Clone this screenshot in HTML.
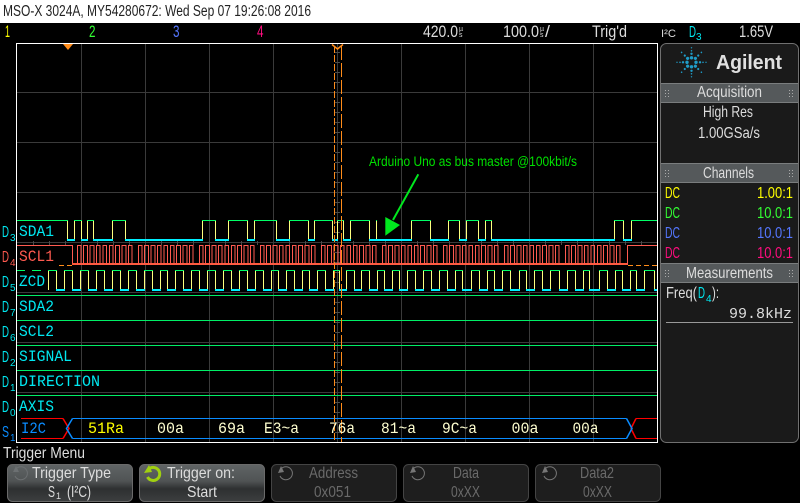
<!DOCTYPE html>
<html><head><meta charset="utf-8"><title>Oscilloscope</title>
<style>
html,body{margin:0;padding:0;background:#000;width:800px;height:503px;overflow:hidden}
svg{display:block}
text{font-family:"Liberation Sans",sans-serif;font-size:16px;fill:#ddd}
.m{font-family:"Liberation Mono",monospace;font-size:16px}
.c{fill:#00e8f0}
.l path,.l line,.l rect,#b{shape-rendering:crispEdges}
</style></head><body>
<svg width="800" height="503" viewBox="0 0 800 503" xmlns="http://www.w3.org/2000/svg">
<defs>
<linearGradient id="k" x1="0" y1="0" x2="0" y2="1"><stop offset="0" stop-color="#606465"/><stop offset=".45" stop-color="#505354"/><stop offset=".66" stop-color="#2e3031"/><stop offset="1" stop-color="#3c3e3f"/></linearGradient>
<path id="b" fill="none" stroke="#ff5a50" d="M0 265V245.5H3.7V265M6.4 265V245.5H10.1V265M12.8 265V245.5H16.5V265M19.2 265V245.5H22.9V265M25.6 265V245.5H29.3V265M32 265V245.5H35.7V265M38.4 265V245.5H42.1V265M44.8 265V245.5H48.5V265M51.2 265V245.5H54.9V265"/>
<g id="ray"><circle cx="4.5" cy="0" r="1.7"/><circle cx="8.5" cy="0" r="1.2"/><circle cx="11.5" cy="0" r=".8"/><circle cx="14.5" cy="0" r=".7"/></g>
<g id="ray2"><circle cx="5.5" cy="0" r="1.6"/><circle cx="9.5" cy="0" r="1.1"/><circle cx="14" cy="0" r=".8"/></g>
<g id="grip" fill="#aaa"><rect x="0" y="0" width="1" height="1"/><rect x="3" y="0" width="1" height="1"/><rect x="0" y="3" width="1" height="1"/><rect x="3" y="3" width="1" height="1"/><rect x="0" y="6" width="1" height="1"/><rect x="3" y="6" width="1" height="1"/></g>
</defs>

<rect width="800" height="503" fill="#000"/>
<rect width="800" height="23" fill="#fff"/>
<text x="3" y="16" style="fill:#222;font-size:15.5px" textLength="308" lengthAdjust="spacingAndGlyphs">MSO-X 3024A, MY54280672: Wed Sep 07 19:26:08 2016</text>

<!-- top status -->
<text x="5" y="37" style="fill:#ff0;font-size:17px" textLength="5" lengthAdjust="spacingAndGlyphs">1</text>
<text x="89" y="37" style="fill:#33ff33;font-size:17px" textLength="6.5" lengthAdjust="spacingAndGlyphs">2</text>
<text x="173" y="37" style="fill:#5577ff;font-size:17px" textLength="6.5" lengthAdjust="spacingAndGlyphs">3</text>
<text x="257" y="37" style="fill:#ff0d7f;font-size:17px" textLength="6.5" lengthAdjust="spacingAndGlyphs">4</text>
<text x="423" y="37" style="font-size:17px" textLength="35" lengthAdjust="spacingAndGlyphs">420.0</text>
<text x="459" y="31" style="font-size:7px">µ</text><text x="459" y="37" style="font-size:7px">s</text>
<text x="503" y="37" style="font-size:17px" textLength="36" lengthAdjust="spacingAndGlyphs">100.0</text>
<text x="540" y="31" style="font-size:7px">µ</text><text x="540" y="37" style="font-size:7px">s</text>
<text x="545" y="37" style="font-size:17px" textLength="5" lengthAdjust="spacingAndGlyphs">/</text>
<text x="592" y="37" style="font-size:17px" textLength="35" lengthAdjust="spacingAndGlyphs">Trig'd</text>
<text x="661" y="37" style="font-size:11px" textLength="15" lengthAdjust="spacingAndGlyphs">I²C</text>
<text x="689" y="37" class="c" style="font-size:16px" textLength="7" lengthAdjust="spacingAndGlyphs">D</text><text x="696" y="40" class="c" style="font-size:10px">3</text>
<text x="739" y="37" style="font-size:17px" textLength="34" lengthAdjust="spacingAndGlyphs">1.65V</text>

<!-- grid -->
<g class="l">
<path stroke="#3a3a3a" fill="none" d="M81.5 44V442M145.5 44V442M209.5 44V442M273.5 44V442M337.5 44V442M401.5 44V442M465.5 44V442M529.5 44V442M593.5 44V442M17 92.5H657M17 142.5H657M17 192.5H657M17 242.5H657M17 292.5H657M17 342.5H657M17 392.5H657"/>
<path stroke="#4a4a4a" fill="none" d="M335 52.5h5M335 62.5h5M335 72.5h5M335 82.5h5M335 102.5h5M335 112.5h5M335 122.5h5M335 132.5h5M335 152.5h5M335 162.5h5M335 172.5h5M335 182.5h5M335 202.5h5M335 212.5h5M335 222.5h5M335 232.5h5M335 252.5h5M335 262.5h5M335 272.5h5M335 282.5h5M335 302.5h5M335 312.5h5M335 322.5h5M335 332.5h5M335 352.5h5M335 362.5h5M335 372.5h5M335 382.5h5M335 402.5h5M335 412.5h5M335 422.5h5M335 432.5h5"/>
<path stroke="#4a4a4a" fill="none" d="M33.5 241v4M49.5 241v4M65.5 241v4M97.5 241v4M113.5 241v4M129.5 241v4M161.5 241v4M177.5 241v4M193.5 241v4M225.5 241v4M241.5 241v4M257.5 241v4M289.5 241v4M305.5 241v4M321.5 241v4M353.5 241v4M369.5 241v4M385.5 241v4M417.5 241v4M433.5 241v4M449.5 241v4M481.5 241v4M497.5 241v4M513.5 241v4M545.5 241v4M561.5 241v4M577.5 241v4M609.5 241v4M625.5 241v4M641.5 241v4"/>
<!-- frame -->
<path stroke="#fff" fill="none" d="M16.5 43.5H657.5V442.5H16.5Z"/>
<!-- flat digital lines -->
<path stroke="#00ee66" fill="none" d="M17 295.5H657M17 320.5H657M17 345.5H657M17 370.5H657M17 395.5H657"/>

<!-- SDA1 -->
<path stroke="#ffff80" fill="none" d="M67.5 221V240M74.5 221V240M81.5 221V240M87.5 221V240M93.5 221V240M112.5 221V240M125.5 221V240M202.5 221V240M215.5 221V240M228.5 221V240M247.5 221V240M254.5 221V240M276.5 221V240M289.5 221V240M308.5 221V240M314.5 221V240M332.5 221V240M337.5 221V240M343.5 221V240M350.5 221V240M369.5 221V240M376.5 221V240M411.5 221V240M430.5 221V240M448.5 221V240M459.5 221V240M466.5 221V240M478.5 221V240M485.5 221V240M491.5 221V240M614.5 221V240M623.5 221V240M631.5 221V240"/>
<path stroke="#00ff66" fill="none" d="M17 220.5H68M74 220.5H82M87 220.5H94M112 220.5H126M202 220.5H216M228 220.5H248M254 220.5H277M289 220.5H309M314 220.5H333M337 220.5H344M350 220.5H370M376 220.5H377M411 220.5H431M448 220.5H460M466 220.5H479M485 220.5H492M614 220.5H624M631 220.5H657"/>
<path stroke="#00f0ff" stroke-width="2" fill="none" d="M67 240H75M81 240H88M93 240H113M125 240H203M215 240H229M247 240H255M276 240H290M308 240H315M332 240H338M343 240H351M369 240H412M430 240H449M459 240H467M478 240H486M491 240H615M623 240H632"/>

<!-- SCL1 -->
<path stroke="#ff5a50" fill="none" d="M17 245.5H72.5V265"/>
<path stroke="#ff5a3c" stroke-width="2" fill="none" d="M72 264H627"/>
<path stroke="#ff8c1a" fill="none" stroke-dasharray="5 3" d="M59 265.5H72M628 265.5H657"/>
<use href="#b" x="77.3"/><use href="#b" x="138.3"/><use href="#b" x="199.3"/><use href="#b" x="260.3"/><use href="#b" x="321.3"/><use href="#b" x="382.3"/><use href="#b" x="443.3"/><use href="#b" x="504.3"/><use href="#b" x="565.3"/>
<path stroke="#ff5a50" fill="none" d="M627.5 265V245.5H657"/>

<!-- ZCD -->
<path stroke="#ffff80" fill="none" d="M48.5 271V290M56.5 271V290M64.5 271V290M72.5 271V290M80.5 271V290M88.5 271V290M96.5 271V290M104.5 271V290M112.5 271V290M120.5 271V290M128.5 271V290M136.5 271V290M144.5 271V290M152.5 271V290M160.5 271V290M167.5 271V290M175.5 271V290M183.5 271V290M191.5 271V290M199.5 271V290M207.5 271V290M215.5 271V290M223.5 271V290M231.5 271V290M239.5 271V290M247.5 271V290M255.5 271V290M263.5 271V290M271.5 271V290M278.5 271V290M286.5 271V290M294.5 271V290M302.5 271V290M309.5 271V290M317.5 271V290M325.5 271V290M333.5 271V290M339.5 271V290M346.5 271V290M354.5 271V290M361.5 271V290M369.5 271V290M377.5 271V290M384.5 271V290M392.5 271V290M399.5 271V290M407.5 271V290M415.5 271V290M423.5 271V290M431.5 271V290M439.5 271V290M447.5 271V290M455.5 271V290M462.5 271V290M471.5 271V290M479.5 271V290M487.5 271V290M494.5 271V290M502.5 271V290M510.5 271V290M519.5 271V290M526.5 271V290M534.5 271V290M542.5 271V290M550.5 271V290M559.5 271V290M567.5 271V290M575.5 271V290M583.5 271V290M589.5 271V290M599.5 271V290M607.5 271V290M615.5 271V290M622.5 271V290M630.5 271V290M636.5 271V290M644.5 271V290M654.5 271V290"/>
<path stroke="#00ff66" fill="none" d="M17 270.5H25M32 270.5H41M48 270.5H57M64 270.5H73M80 270.5H89M96 270.5H105M112 270.5H121M128 270.5H137M144 270.5H153M160 270.5H168M175 270.5H184M191 270.5H200M207 270.5H216M223 270.5H232M239 270.5H248M255 270.5H264M271 270.5H279M286 270.5H295M302 270.5H310M317 270.5H326M333 270.5H340M346 270.5H355M361 270.5H370M377 270.5H385M392 270.5H400M407 270.5H416M423 270.5H432M439 270.5H448M455 270.5H463M471 270.5H480M487 270.5H495M502 270.5H511M519 270.5H527M534 270.5H543M550 270.5H560M567 270.5H576M583 270.5H590M599 270.5H608M615 270.5H623M630 270.5H637M644 270.5H655"/>
<path stroke="#00f0ff" stroke-width="2" fill="none" d="M56 290H65M72 290H81M88 290H97M104 290H113M120 290H129M136 290H145M152 290H161M167 290H176M183 290H192M199 290H208M215 290H224M231 290H240M247 290H256M263 290H272M278 290H287M294 290H303M309 290H318M325 290H334M339 290H347M354 290H362M369 290H378M384 290H393M399 290H408M415 290H424M431 290H440M447 290H456M462 290H472M479 290H488M494 290H503M510 290H520M526 290H535M542 290H551M559 290H568M575 290H584M589 290H600M607 290H616M622 290H631M636 290H645M654 290H657"/>

<!-- serial bus -->
<path stroke="#0a8cff" fill="none" d="M72.5 418.5H626.5M72.5 438.5H626.5"/>
<path stroke="#ff0000" fill="none" d="M21 418.5H63M21 438.5H63M636 418.5H657M636 438.5H657"/>
</g>
<g fill="none" stroke-width="1.5">
<path stroke="#ff0000" d="M63 418.5L69 428.5L63 438.5M636 418.5L631 428.5L636 438.5"/>
<path stroke="#0a8cff" d="M72.5 418.5L66.5 428.5L72.5 438.5M626.5 418.5L632 428.5L626.5 438.5"/>
</g>

<!-- cursors -->
<g class="l" fill="none" stroke="#ff8c1a">
<path stroke-dasharray="7 2" d="M334.5 46V442"/>
<path stroke-dasharray="14 3" d="M341.5 46V442"/>
</g>
<path d="M63 44H73L68 50Z" fill="#ff8c1a"/>
<path d="M332 44.5L337.5 49L343 44.5" fill="none" stroke="#ff8c1a" stroke-width="1.5"/>

<!-- annotation -->
<text x="369" y="166" style="fill:#00e000;font-size:13.5px" textLength="208" lengthAdjust="spacingAndGlyphs">Arduino Uno as bus master @100kbit/s</text>
<path d="M418.3 174.3L393 220" stroke="#00e81e" stroke-width="2" fill="none"/>
<path d="M385.3 217L400 225L385.3 235.7Z" fill="#00e81e"/>

<!-- labels -->
<text x="19" y="236" class="m c" textLength="35" lengthAdjust="spacingAndGlyphs">SDA1</text>
<text x="19" y="261" style="fill:#ff5a50" class="m" textLength="35" lengthAdjust="spacingAndGlyphs">SCL1</text>
<text x="19" y="286" class="m c" textLength="26" lengthAdjust="spacingAndGlyphs">ZCD</text>
<text x="19" y="311" class="m c" textLength="35" lengthAdjust="spacingAndGlyphs">SDA2</text>
<text x="19" y="336" class="m c" textLength="35" lengthAdjust="spacingAndGlyphs">SCL2</text>
<text x="19" y="361" class="m c" textLength="53" lengthAdjust="spacingAndGlyphs">SIGNAL</text>
<text x="19" y="386" class="m c" textLength="81" lengthAdjust="spacingAndGlyphs">DIRECTION</text>
<text x="19" y="411" class="m c" textLength="35" lengthAdjust="spacingAndGlyphs">AXIS</text>
<text x="21" y="433" class="m" style="fill:#0a8cff" textLength="25" lengthAdjust="spacingAndGlyphs">I2C</text>

<text x="2" y="237" class="c" textLength="7" lengthAdjust="spacingAndGlyphs">D</text><text x="10" y="241" class="c" style="font-size:10px">3</text>
<text x="2" y="262" style="fill:#ff5a50" textLength="7" lengthAdjust="spacingAndGlyphs">D</text><text x="10" y="266" style="fill:#ff5a50;font-size:10px">4</text>
<text x="2" y="287" class="c" textLength="7" lengthAdjust="spacingAndGlyphs">D</text><text x="10" y="291" class="c" style="font-size:10px">5</text>
<text x="2" y="312" class="c" textLength="7" lengthAdjust="spacingAndGlyphs">D</text><text x="10" y="316" class="c" style="font-size:10px">7</text>
<text x="2" y="337" class="c" textLength="7" lengthAdjust="spacingAndGlyphs">D</text><text x="10" y="341" class="c" style="font-size:10px">6</text>
<text x="2" y="362" class="c" textLength="7" lengthAdjust="spacingAndGlyphs">D</text><text x="10" y="366" class="c" style="font-size:10px">2</text>
<text x="2" y="387" class="c" textLength="7" lengthAdjust="spacingAndGlyphs">D</text><text x="10" y="391" class="c" style="font-size:10px">1</text>
<text x="2" y="412" class="c" textLength="7" lengthAdjust="spacingAndGlyphs">D</text><text x="10" y="416" class="c" style="font-size:10px">0</text>
<text x="2" y="437" style="fill:#0a8cff" textLength="7" lengthAdjust="spacingAndGlyphs">S</text><text x="10" y="441" style="fill:#0a8cff;font-size:10px">1</text>

<!-- bus decode -->
<text x="88" y="433" class="m" style="fill:#ffff00" textLength="36" lengthAdjust="spacingAndGlyphs">51Ra</text>
<text x="157" y="433" class="m" style="fill:#ffffd0" textLength="27" lengthAdjust="spacingAndGlyphs">00a</text>
<text x="218" y="433" class="m" style="fill:#ffffd0" textLength="27" lengthAdjust="spacingAndGlyphs">69a</text>
<text x="264" y="433" class="m" style="fill:#ffffd0" textLength="35" lengthAdjust="spacingAndGlyphs">E3~a</text>
<text x="329" y="433" class="m" style="fill:#ffffd0" textLength="26" lengthAdjust="spacingAndGlyphs">76a</text>
<text x="381" y="433" class="m" style="fill:#ffffd0" textLength="35" lengthAdjust="spacingAndGlyphs">81~a</text>
<text x="442" y="433" class="m" style="fill:#ffffd0" textLength="35" lengthAdjust="spacingAndGlyphs">9C~a</text>
<text x="511.5" y="433" class="m" style="fill:#ffffd0" textLength="27" lengthAdjust="spacingAndGlyphs">00a</text>
<text x="572.5" y="433" class="m" style="fill:#ffffd0" textLength="26" lengthAdjust="spacingAndGlyphs">00a</text>

<!-- right panel -->
<rect x="660.5" y="43.5" width="138" height="399" rx="6" fill="#1a1a1a" stroke="#707070"/>
<g fill="#1f9cc8" transform="translate(691.5,62.3)">
<use href="#ray"/><use href="#ray" transform="rotate(90)"/><use href="#ray" transform="rotate(180)"/><use href="#ray" transform="rotate(270)"/>
<use href="#ray2" transform="rotate(45)"/><use href="#ray2" transform="rotate(135)"/><use href="#ray2" transform="rotate(225)"/><use href="#ray2" transform="rotate(315)"/>
</g>
<text x="716" y="69" style="fill:#e0e0e0;font-size:20px;font-weight:bold" textLength="66" lengthAdjust="spacingAndGlyphs">Agilent</text>

<g class="l">
<rect x="661" y="83" width="137" height="20" fill="#7a7d7e"/><rect x="661" y="84" width="137" height="18" fill="#55595b"/>
<rect x="661" y="163" width="137" height="20" fill="#7a7d7e"/><rect x="661" y="164" width="137" height="18" fill="#55595b"/>
<rect x="661" y="263" width="137" height="20" fill="#7a7d7e"/><rect x="661" y="264" width="137" height="18" fill="#55595b"/>
</g>
<use href="#grip" x="665" y="90"/><use href="#grip" x="789" y="90"/>
<use href="#grip" x="665" y="170"/><use href="#grip" x="789" y="170"/>
<use href="#grip" x="665" y="270"/><use href="#grip" x="789" y="270"/>
<text x="697" y="97" textLength="65" lengthAdjust="spacingAndGlyphs">Acquisition</text>
<text x="703" y="117" textLength="50" lengthAdjust="spacingAndGlyphs">High Res</text>
<text x="698" y="138" textLength="62" lengthAdjust="spacingAndGlyphs">1.00GSa/s</text>
<text x="703" y="178" textLength="51" lengthAdjust="spacingAndGlyphs">Channels</text>
<text x="686" y="278" textLength="87" lengthAdjust="spacingAndGlyphs">Measurements</text>
<text x="665" y="198" style="fill:#ffff00" textLength="15" lengthAdjust="spacingAndGlyphs">DC</text>
<text x="757" y="198" style="fill:#ffff00" textLength="36" lengthAdjust="spacingAndGlyphs">1.00:1</text>
<text x="665" y="218" style="fill:#33ff33" textLength="15" lengthAdjust="spacingAndGlyphs">DC</text>
<text x="757" y="218" style="fill:#33ff33" textLength="36" lengthAdjust="spacingAndGlyphs">10.0:1</text>
<text x="665" y="238" style="fill:#5577ff" textLength="15" lengthAdjust="spacingAndGlyphs">DC</text>
<text x="757" y="238" style="fill:#5577ff" textLength="36" lengthAdjust="spacingAndGlyphs">10.0:1</text>
<text x="665" y="258" style="fill:#ff0d7f" textLength="15" lengthAdjust="spacingAndGlyphs">DC</text>
<text x="757" y="258" style="fill:#ff0d7f" textLength="36" lengthAdjust="spacingAndGlyphs">10.0:1</text>
<text x="666" y="298" textLength="31" lengthAdjust="spacingAndGlyphs">Freq(</text>
<text x="698" y="298" class="c" textLength="7" lengthAdjust="spacingAndGlyphs">D</text><text x="706" y="302" class="c" style="font-size:10px">4</text>
<text x="712" y="298" textLength="7" lengthAdjust="spacingAndGlyphs">):</text>
<text x="729" y="318" class="m" style="font-size:15px" textLength="63" lengthAdjust="spacingAndGlyphs">99.8kHz</text>
<rect x="666" y="322" width="127" height="1" fill="#999"/>

<!-- bottom -->
<text x="3" y="458" textLength="82" lengthAdjust="spacingAndGlyphs">Trigger Menu</text>

<rect x="7.5" y="464.5" width="125" height="37" rx="5" fill="url(#k)" stroke="#6a6a6a"/>
<rect x="139.5" y="464.5" width="125" height="37" rx="5" fill="url(#k)" stroke="#6a6a6a"/>
<rect x="271.5" y="464.5" width="125" height="37" rx="5" fill="#1e1e1e" stroke="#444"/>
<rect x="403.5" y="464.5" width="125" height="37" rx="5" fill="#1e1e1e" stroke="#444"/>
<rect x="535.5" y="464.5" width="125" height="37" rx="5" fill="#1e1e1e" stroke="#444"/>

<path d="M16 469A6.5 6.5 0 1 1 15 476" fill="none" stroke="#6c7072" stroke-width="1"/><path d="M13 472L16 466L19 472Z" fill="#6c7072"/>
<path d="M149 469A6.5 6.5 0 1 1 147.5 477" fill="none" stroke="#a0d010" stroke-width="3"/><path d="M144 473L149 465L152 472Z" fill="#a0d010"/>
<path d="M281 469A6.5 6.5 0 1 1 280 476" fill="none" stroke="#777" stroke-width="1"/><path d="M278 473L281 466L284 472Z" fill="#777"/>
<path d="M413 469A6.5 6.5 0 1 1 412 476" fill="none" stroke="#777" stroke-width="1"/><path d="M410 473L413 466L416 472Z" fill="#777"/>
<path d="M545 469A6.5 6.5 0 1 1 544 476" fill="none" stroke="#777" stroke-width="1"/><path d="M542 473L545 466L548 472Z" fill="#777"/>

<text x="32" y="478" textLength="79" lengthAdjust="spacingAndGlyphs">Trigger Type</text>
<text x="48" y="497" textLength="7" lengthAdjust="spacingAndGlyphs">S</text><text x="56" y="499" style="font-size:9px">1</text>
<text x="67" y="497" textLength="24" lengthAdjust="spacingAndGlyphs">(I²C)</text>
<text x="167" y="478" textLength="68" lengthAdjust="spacingAndGlyphs">Trigger on:</text>
<text x="187" y="497" textLength="30" lengthAdjust="spacingAndGlyphs">Start</text>
<text x="309" y="478" style="fill:#6a6a6a" textLength="49" lengthAdjust="spacingAndGlyphs">Address</text>
<text x="314" y="497" style="fill:#6a6a6a" textLength="37" lengthAdjust="spacingAndGlyphs">0x051</text>
<text x="453" y="478" style="fill:#6a6a6a" textLength="26" lengthAdjust="spacingAndGlyphs">Data</text>
<text x="451" y="497" style="fill:#6a6a6a" textLength="29" lengthAdjust="spacingAndGlyphs">0xXX</text>
<text x="580" y="478" style="fill:#6a6a6a" textLength="34" lengthAdjust="spacingAndGlyphs">Data2</text>
<text x="583" y="497" style="fill:#6a6a6a" textLength="29" lengthAdjust="spacingAndGlyphs">0xXX</text>
</svg>
</body></html>
